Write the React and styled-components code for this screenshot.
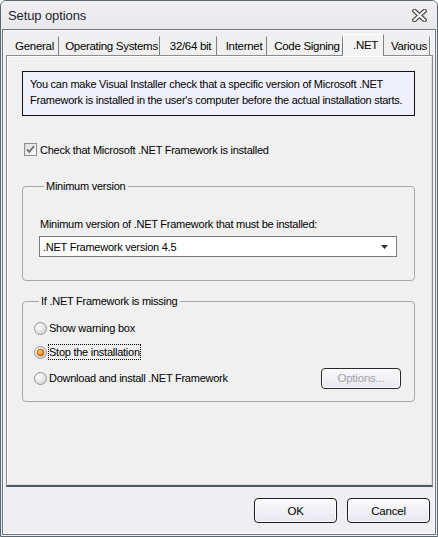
import React from "react";
import styled, { createGlobalStyle } from "styled-components";

const GlobalStyle = createGlobalStyle`
  html, body {
    margin: 0;
    padding: 0;
    background: #ffffff;
  }
  body {
    font-family: "Liberation Sans", Arial, sans-serif;
    font-size: 11px;
    letter-spacing: -0.25px;
    color: #000;
  }
`;

const Window = styled.div`
  width: 438px;
  height: 537px;
  box-sizing: border-box;
  border: 1px solid #5b6770;
  border-radius: 6px 6px 0 0;
  background: #eeeef2;
  display: flex;
  flex-direction: column;
`;

const TitleBar = styled.div`
  height: 28px;
  display: flex;
  align-items: center;
  justify-content: space-between;
  padding: 0 10px 0 7px;
  background: linear-gradient(#f0f0f2, #e9e9ec);
  border-radius: 5px 5px 0 0;
  > span {
    font-size: 13px;
    color: #1d2433;
    letter-spacing: -0.1px;
  }
`;

const Body = styled.div`
  flex: 1;
  margin: 0 1px 1px 1px;
  border: 1px solid #6b7780;
  box-shadow: inset 0 0 0 1px #fafafc;
  display: flex;
  flex-direction: column;
  background: #eeeef3;
`;

const TabStrip = styled.div`
  display: flex;
  align-items: flex-end;
  height: 25px;
  margin: 0 2px 0 3px;
`;

const Tab = styled.div`
  width: ${(p) => p.$w}px;
  height: ${(p) => (p.$active ? 22 : 19)}px;
  margin-bottom: ${(p) => (p.$active ? -1 : 0)}px;
  box-sizing: border-box;
  display: flex;
  align-items: center;
  justify-content: center;
  padding-left: 4px;
  padding-bottom: ${(p) => (p.$active ? 2 : 1)}px;
  background: ${(p) => (p.$active ? "#f4f4f4" : "#f0f0f0")};
  border-right: 1px solid #7f7f7f;
  border-left: 1px solid ${(p) => (p.$active ? "#ffffff" : "transparent")};
  border-top: 1px solid ${(p) => (p.$active ? "#ffffff" : "transparent")};
  box-shadow: ${(p) => (p.$active ? "none" : "1px 0 0 #ffffff")};
  position: relative;
  z-index: ${(p) => (p.$active ? 2 : 1)};
  font-size: 11.5px;
  letter-spacing: -0.3px;
  white-space: nowrap;
`;

const Pane = styled.div`
  flex: 0 0 auto;
  height: 432px;
  box-sizing: border-box;
  margin: 0 2px 0 3px;
  background: #f0f0f0;
  border: 1px solid #8c8c8c;
  border-bottom: 2px solid #505860;
  box-shadow: inset 1px 1px 0 #ffffff, inset -1px -1px 0 #dcdcdc;
  padding: 15px 17px 0 15px;
  display: flex;
  flex-direction: column;
`;

const InfoBox = styled.div`
  height: 45px;
  box-sizing: border-box;
  border: 1px solid #111;
  background: #f0f0fa;
  padding: 4px 0 0 7px;
  line-height: 16px;
  white-space: nowrap;
`;

const CheckRow = styled.label`
  display: flex;
  align-items: center;
  gap: 3px;
  margin: 27px 0 0 2px;
  height: 13px;
`;

const Group = styled.fieldset`
  margin: ${(p) => p.$top}px 0 0 0;
  padding: ${(p) => p.$pad};
  border: 1px solid #a7a7a7;
  border-radius: 4px;
  height: ${(p) => p.$h}px;
  box-sizing: border-box;
  min-width: 0;
  > legend {
    padding: 0 3px 0 2px;
    margin-left: 5px;
    line-height: 14px;
  }
`;

const FieldLabel = styled.div`
  margin-left: 1px;
`;

const Select = styled.div`
  margin-top: 6px;
  height: 21px;
  width: 358px;
  box-sizing: border-box;
  border: 1px solid #7a7a7a;
  background: #ffffff;
  display: flex;
  align-items: center;
  justify-content: space-between;
  padding: 0 8px 0 3px;
`;

const RadioRow = styled.div`
  display: flex;
  align-items: center;
  height: ${(p) => p.$h}px;
  > span {
    margin-left: 1px;
    padding: 0;
    line-height: 14px;
    border: 1px dotted ${(p) => (p.$focus ? "#000" : "transparent")};
  }
`;

const Spacer = styled.div`
  flex: 1;
`;

const Button = styled.button`
  width: ${(p) => p.$w}px;
  height: ${(p) => p.$h}px;
  box-sizing: border-box;
  border: 1px solid ${(p) => (p.disabled ? "#2a2a2a" : "#1c1c1c")};
  border-radius: 4px;
  background: linear-gradient(#fbfbfd, #e6e6ee);
  box-shadow: inset 0 0 0 1px #ffffff;
  font-family: "Liberation Sans", Arial, sans-serif;
  font-size: 11.5px;
  letter-spacing: -0.2px;
  color: ${(p) => (p.disabled ? "#a3a3a3" : "#000")};
  padding: 0;
`;

const Footer = styled.div`
  flex: 1;
  display: flex;
  justify-content: flex-end;
  align-items: flex-start;
  gap: 10px;
  padding: 11px 5px 0 0;
`;

function CheckBox() {
  return (
    <svg width="13" height="13" viewBox="0 0 13 13">
      <defs>
        <linearGradient id="cb" x1="0" y1="0" x2="1" y2="1">
          <stop offset="0" stopColor="#dcdcdc" />
          <stop offset="1" stopColor="#ffffff" />
        </linearGradient>
      </defs>
      <rect x="0.5" y="0.5" width="12" height="12" fill="url(#cb)" stroke="#8e8f8f" />
      <path d="M3 6.3 L5.3 8.8 L10 3.2" fill="none" stroke="#6e6e6e" strokeWidth="1.8" />
    </svg>
  );
}

function Radio({ checked }) {
  return (
    <svg width="13" height="13" viewBox="0 0 13 13">
      <defs>
        <radialGradient id="rb" cx="0.35" cy="0.35" r="0.8">
          <stop offset="0" stopColor="#ffffff" />
          <stop offset="1" stopColor="#cfcfcf" />
        </radialGradient>
        <radialGradient id="ro" cx="0.4" cy="0.4" r="0.7">
          <stop offset="0" stopColor="#ffd27a" />
          <stop offset="0.6" stopColor="#f08a1c" />
          <stop offset="1" stopColor="#b85a00" />
        </radialGradient>
      </defs>
      <circle cx="6.5" cy="6.5" r="6" fill="url(#rb)" stroke="#979797" />
      {checked && <circle cx="6.5" cy="6.5" r="3.5" fill="url(#ro)" stroke="#a85000" strokeWidth="0.6" />}
    </svg>
  );
}

function CloseIcon() {
  return (
    <svg width="15" height="13" viewBox="0 0 15 13">
      <path d="M2.5 2 L12.5 11 M12.5 2 L2.5 11" stroke="#505050" strokeWidth="4.6" strokeLinecap="square" fill="none" />
      <path d="M2.5 2 L12.5 11 M12.5 2 L2.5 11" stroke="#f4f4f4" strokeWidth="2.2" strokeLinecap="square" fill="none" />
    </svg>
  );
}

const tabs = [
  { label: "General", w: 53 },
  { label: "Operating Systems", w: 101 },
  { label: "32/64 bit", w: 57 },
  { label: "Internet", w: 50 },
  { label: "Code Signing", w: 76 },
  { label: ".NET", w: 41, active: true },
  { label: "Various", w: 46 },
];

export default function App() {
  return (
    <>
      <GlobalStyle />
      <Window>
        <TitleBar>
          <span>Setup options</span>
          <CloseIcon />
        </TitleBar>
        <Body>
          <TabStrip>
            {tabs.map((t) => (
              <Tab key={t.label} $w={t.w} $active={t.active}>
                {t.label}
              </Tab>
            ))}
          </TabStrip>
          <Pane>
            <InfoBox>
              You can make Visual Installer check that a specific version of Microsoft .NET
              <br />
              Framework is installed in the user's computer before the actual installation starts.
            </InfoBox>
            <CheckRow>
              <CheckBox />
              Check that Microsoft .NET Framework is installed
            </CheckRow>
            <Group $top={23} $h={102} $pad="25px 15px 0 16px">
              <legend>Minimum version</legend>
              <FieldLabel>Minimum version of .NET Framework that must be installed:</FieldLabel>
              <Select>
                .NET Framework version 4.5
                <svg width="7" height="4" viewBox="0 0 7 4">
                  <path d="M0 0 L7 0 L3.5 4 Z" fill="#333" />
                </svg>
              </Select>
            </Group>
            <Group $top={13} $h={108} $pad="8px 13px 0 11px">
              <legend>If .NET Framework is missing</legend>
              <RadioRow $h={24}>
                <Radio />
                <span>Show warning box</span>
              </RadioRow>
              <RadioRow $h={24} $focus>
                <Radio checked />
                <span>Stop the installation</span>
              </RadioRow>
              <RadioRow $h={28}>
                <Radio />
                <span>Download and install .NET Framework</span>
                <Spacer />
                <Button disabled $w={80} $h={21}>
                  Options...
                </Button>
              </RadioRow>
            </Group>
          </Pane>
          <Footer>
            <Button $w={83} $h={25}>OK</Button>
            <Button $w={83} $h={25}>Cancel</Button>
          </Footer>
        </Body>
      </Window>
    </>
  );
}
